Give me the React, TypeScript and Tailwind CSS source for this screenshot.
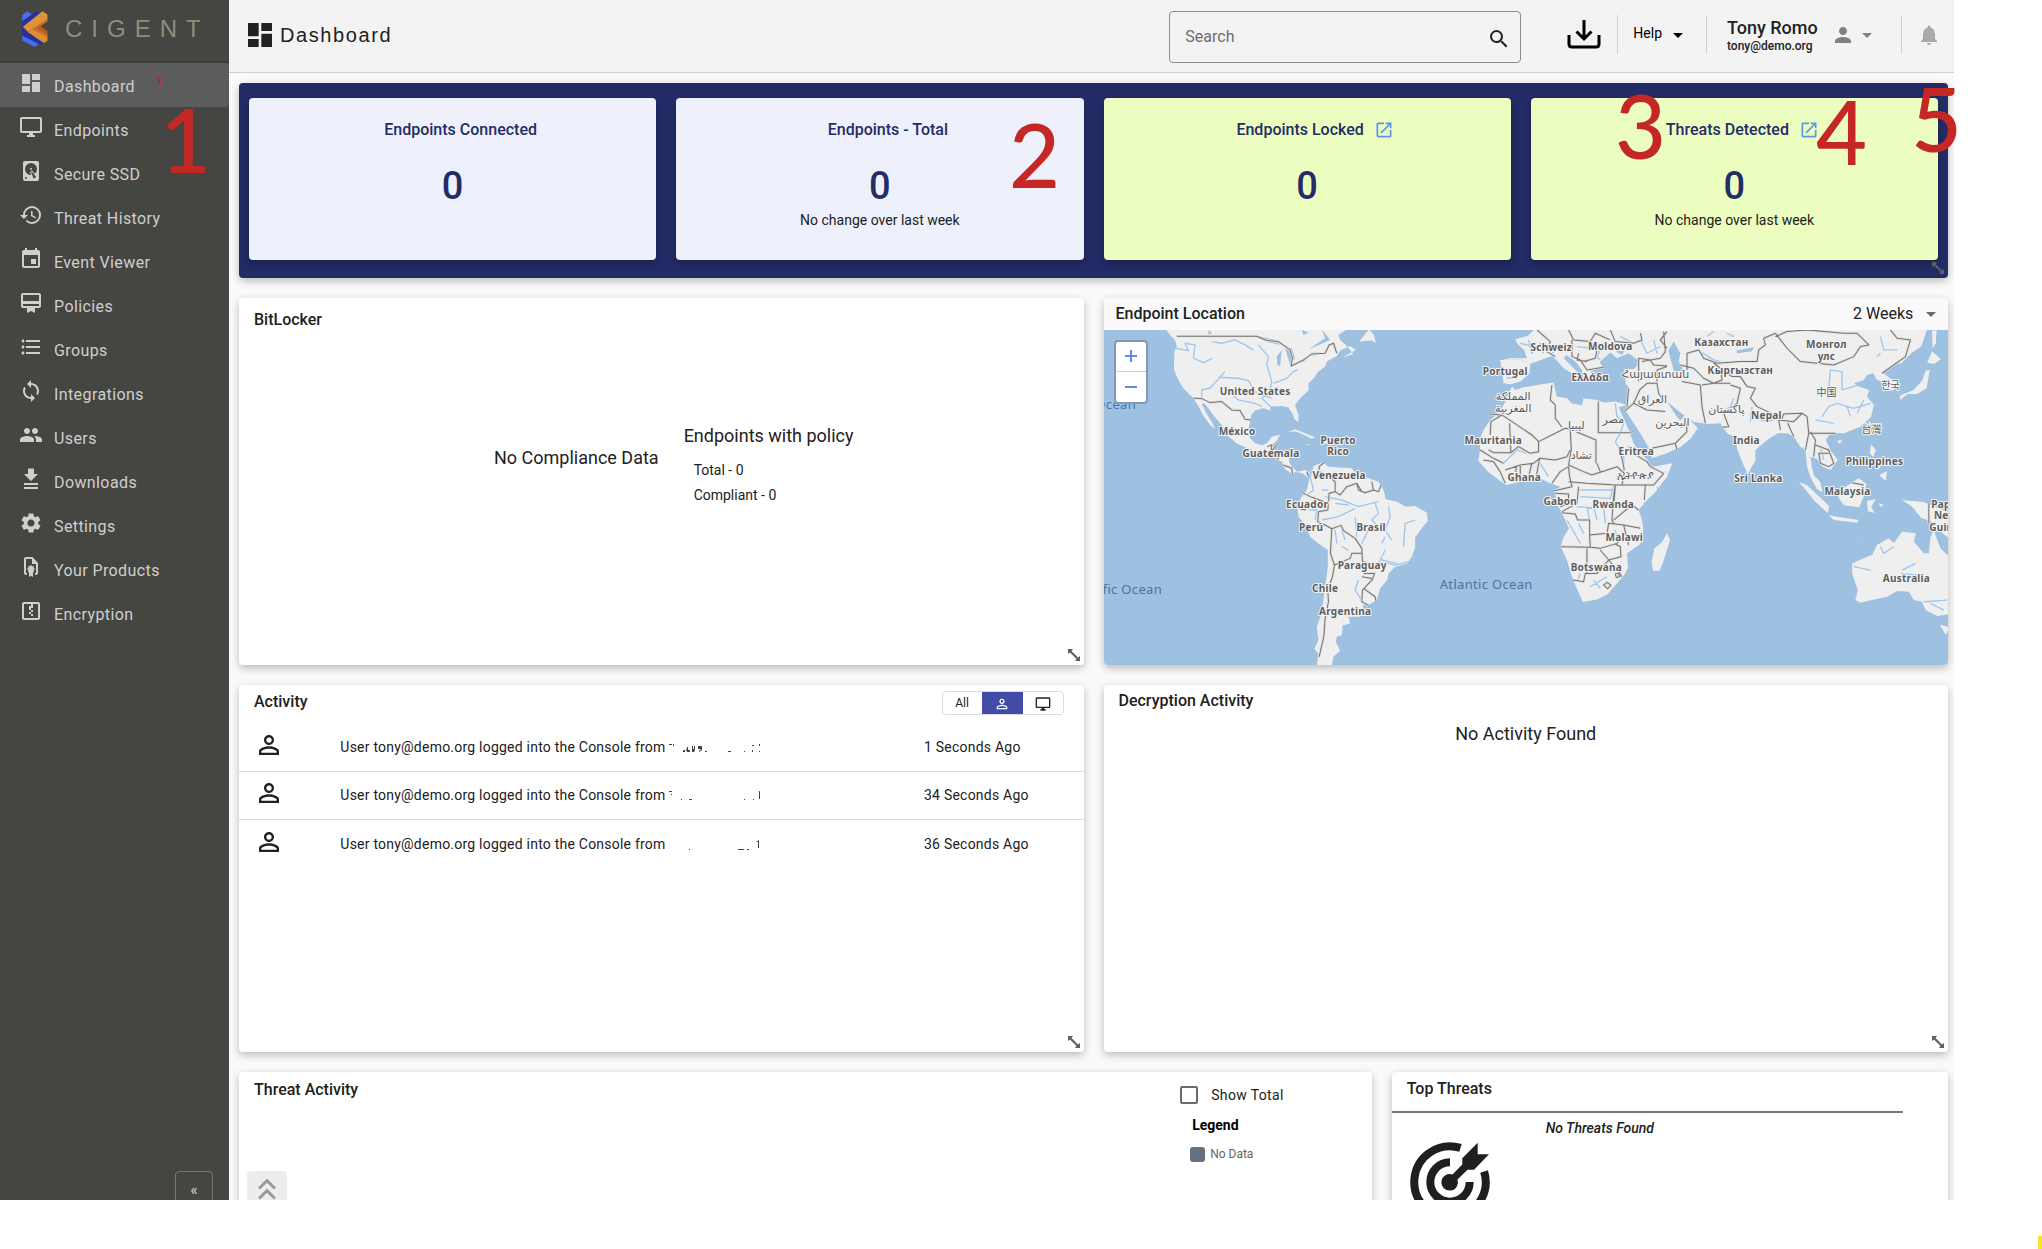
import React from "react";
import {
  MdArrowDropDown,
  MdCardMembership,
  MdDashboard,
  MdEvent,
  MdFormatListBulleted,
  MdHistory,
  MdKeyboardDoubleArrowUp,
  MdNotifications,
  MdOpenInNew,
  MdOutlineDesktopWindows,
  MdPeople,
  MdPerson,
  MdPersonOutline,
  MdSearch,
  MdSettings,
  MdSync,
} from "react-icons/md";

type IconProps = { className?: string };

function glyph(d: string) {
  return function Glyph({ className }: IconProps) {
    return (
      <svg viewBox="0 0 24 24" className={className} fill="currentColor" aria-hidden="true">
        <path fillRule="evenodd" d={d} />
      </svg>
    );
  };
}

const HardDisk = glyph(
  "M6 2h12a2 2 0 0 1 2 2v16a2 2 0 0 1-2 2H6a2 2 0 0 1-2-2V4a2 2 0 0 1 2-2M12 4a6 6 0 0 0-6 6c0 3.31 2.69 6 6.1 6l-.88-2.23a1 1 0 0 1 .37-1.36l.86-.5a1 1 0 0 1 1.37.37l1.92 2.42A5.98 5.98 0 0 0 18 10a6 6 0 0 0-6-6m0 5a1 1 0 0 1 1 1 1 1 0 0 1-1 1 1 1 0 0 1-1-1 1 1 0 0 1 1-1m-5 9a1 1 0 0 0-1 1 1 1 0 0 0 1 1 1 1 0 0 0 1-1 1 1 0 0 0-1-1m5.09-4.73 2.49 6.31 2.59-1.5-4.22-5.31z",
);
const DownloadBars = glyph("M9 1.5h6V7h4l-7 7-7-7h4zM5 16h14v2H5zM5 20h14v2H5z");
const FileCertificate = glyph(
  "M7 2a2 2 0 0 0-2 2v14c0 1 1 2 3 2v-2H7V4h6v5h4v9h-1v2c2 0 3-1 3-2V8l-5.500-6zM12 9.500l1 2 2.200-.7-.7 2.200 2 1-2 1 .7 2.200-1.200-.3V22l-2-1.200L10 22v-5.100l-1.200.3.7-2.200-2-1 2-1-.7-2.200 2.200.7z",
);
const ZipBox = glyph(
  "M5 3h14a2 2 0 0 1 2 2v14a2 2 0 0 1-2 2H5a2 2 0 0 1-2-2V5a2 2 0 0 1 2-2M5 5v14h14V5h-5v2h-2V5zM12 7h2v2h-2zM10 7h2v2h-2zM12 11h2v2h-2zM10 9h2v2h-2zM10 13h2v2h-2zM12 15h2v2h-2z",
);

const navItems: { label: string; Icon: React.ComponentType<IconProps> }[] = [
  { label: "Dashboard", Icon: MdDashboard },
  { label: "Endpoints", Icon: MdOutlineDesktopWindows },
  { label: "Secure SSD", Icon: HardDisk },
  { label: "Threat History", Icon: MdHistory },
  { label: "Event Viewer", Icon: MdEvent },
  { label: "Policies", Icon: MdCardMembership },
  { label: "Groups", Icon: MdFormatListBulleted },
  { label: "Integrations", Icon: MdSync },
  { label: "Users", Icon: MdPeople },
  { label: "Downloads", Icon: DownloadBars },
  { label: "Settings", Icon: MdSettings },
  { label: "Your Products", Icon: FileCertificate },
  { label: "Encryption", Icon: ZipBox },
];

function Logo() {
  return (
    <svg viewBox="0 0 78 110" className="h-9 w-[26px]" aria-hidden="true">
      <path fill="#4a6cf0" d="M0 12 15 1l15 9L0 32z" />
      <path fill="#2531a0" d="M0 31 44 1l16 10L0 56z" />
      <path fill="#2531a0" d="M0 50 68 97l-18 6L0 78z" />
      <path fill="#1b2470" d="M12 62l14 0 22 15-22-3z" />
      <path fill="#4a6cf0" d="M0 76l51 25-13 9L0 90z" />
      <path fill="#b9581d" d="M46 40 77 60v20L22 60z" />
      <path fill="#df8d32" d="M36 54 77 79v13l-11 6L16 64z" />
      <path fill="#c96d27" d="M30 56 77 22v10L46 53l31 19v8z" />
      <path fill="#e0923a" d="M2 48 62 1l15 10v13L18 64z" />
    </svg>
  );
}

function Sidebar() {
  return (
    <aside className="relative flex w-[229px] shrink-0 flex-col bg-[#454542] text-[#cfcfcd]">
      <div className="flex h-[63px] items-center border-b-2 border-[#3c3c39] pb-1 pl-[22px]">
        <Logo />
        <span className="pt-px pl-[17px] font-['Liberation_Sans',sans-serif] text-2xl tracking-[9px] text-[#8f8e7b]">CIGENT</span>
      </div>
      <nav aria-label="Main">
        <ul>
          {navItems.map(({ label, Icon }, i) => (
            <li key={label}>
              <a
                href={"#" + label.toLowerCase().replace(" ", "-")}
                aria-current={i === 0 ? "page" : undefined}
                className={
                  i === 0
                    ? "flex h-11 items-center gap-[11px] rounded-r bg-[#5c5c5c] pl-[19px]"
                    : "flex h-11 items-center gap-[11px] pl-[19px]"
                }
              >
                <Icon className="mb-1 size-6" />
                <span className="pt-[3px] tracking-wide">{label}</span>
              </a>
            </li>
          ))}
        </ul>
      </nav>
      <button
        type="button"
        aria-label="Collapse menu"
        className="absolute right-4 -bottom-2 h-[37px] w-[38px] rounded border border-[#777] text-base leading-9"
      >
        «
      </button>
    </aside>
  );
}

function TopBar() {
  return (
    <header className="flex h-[73px] shrink-0 items-center border-b border-[#cfcfcf] bg-[#f3f3f3] pr-[13px] pb-[3px] pl-[15px]">
      <MdDashboard className="size-8" />
      <h1 className="pl-1 font-['Liberation_Sans',sans-serif] text-xl tracking-[0.08em]">Dashboard</h1>
      <div className="mt-1 ml-auto flex h-[52px] w-[352px] items-center rounded border border-[#8c8c8c] pr-[9px] pl-[15px]">
        <input
          type="text"
          aria-label="Search"
          placeholder="Search"
          className="h-8 min-w-0 grow bg-transparent outline-none placeholder:text-[#6d6d6d]"
        />
        <MdSearch className="mt-[5px] size-6" />
      </div>
      <button type="button" aria-label="Download" className="mr-4 mb-[2px] ml-[46px]">
        <svg viewBox="0 0 34 30" className="h-[30px] w-[34px]" fill="none" stroke="#000" strokeWidth="3" aria-hidden="true">
          <path d="M17 1v18M9.500 12.500 17 20l7.500-7.500M2 16v9q0 3 3 3h24q3 0 3-3v-9" />
        </svg>
      </button>
      <button type="button" className="flex h-[39px] items-center border-l border-[#d0d0d0] pr-4 pb-[3px] pl-[15px] text-sm text-black">
        Help
        <MdArrowDropDown className="mt-[3px] ml-1 size-6" />
      </button>
      <button type="button" className="flex h-[39px] items-center border-l border-[#d0d0d0] pr-[22px] pl-5 text-left">
        <span className="block w-[104px] pt-[2px] font-medium">
          <span className="block text-lg leading-5">Tony Romo</span>
          <span className="block text-xs leading-4">tony@demo.org</span>
        </span>
        <MdPerson className="size-6 text-[#808080]" />
        <MdArrowDropDown className="size-6 text-[#808080]" />
      </button>
      <button type="button" aria-label="Notifications" className="flex h-[39px] items-center border-l border-[#d0d0d0] pl-[15px]">
        <MdNotifications className="size-6 text-[#a9a9a9]" />
      </button>
    </header>
  );
}

function ResizeMark() {
  return (
    <svg
      viewBox="0 0 14 14"
      className="absolute right-[3px] bottom-[3px] size-[14px] cursor-se-resize text-[#5f5f5f]"
      fill="currentColor"
      aria-hidden="true"
    >
      <path d="M1 1h5L4.500 3l6.500 6.500 2-1.500v5H8l1.500-2L3 4.500 1 6z" />
    </svg>
  );
}

function Card({ className, children }: { className: string; children: React.ReactNode }) {
  return (
    <section className={"relative overflow-hidden rounded bg-white shadow-[0_3px_8px_rgba(0,0,0,0.26)] " + className}>
      {children}
    </section>
  );
}

function Stat({ label, linked, note, tone }: { label: string; linked?: boolean; note?: string; tone: string }) {
  return (
    <div className={"h-[162px] rounded pt-5 text-center shadow-[0_3px_8px_rgba(0,0,0,0.3)] " + tone}>
      <h2 className="flex h-6 items-center justify-center pl-4 font-medium text-[#232c67]">
        {label}
        {linked && (
          <a href="#details" aria-label={label + " details"} className="ml-[10px] text-[#5b93ee]">
            <MdOpenInNew className="size-5" />
          </a>
        )}
      </h2>
      <p className="pt-[21px] text-[38px] leading-[46px] font-medium text-[#232c67]">0</p>
      {note && <p className="pt-px text-sm">{note}</p>}
    </div>
  );
}

/* Land outlines; each group has its own origin, drawn at three units per map pixel. */
const americas = [
  "M210 115 225 135 240 150 245 170 238 185 237 240 250 270 265 295 295 325 308 345 322 372 345 405 360 416 350 395 335 372 320 342 328 340 342 358 362 385 380 405 398 437 422 458 450 472 480 482 505 486 532 502 560 515 570 538 590 550 602 546 622 550 638 562 644 546 630 540 606 545 590 530 582 515 583 495 550 491 526 486 530 466 545 452 555 434 530 440 515 460 500 466 480 460 465 445 459 420 465 395 468 376 480 362 505 355 526 362 526 350 560 348 580 353 592 370 598 388 610 396 610 375 600 345 615 325 640 302 640 280 656 265 668 246 690 230 695 215 725 198 735 182 765 168 782 180 742 203 775 192 752 165 735 150 730 135 760 115z",
  "M792 155 812 130 822 118 836 135 842 160 830 152z",
  "M578 427 600 418 630 430 660 442 650 446 620 432 600 424z",
  "M682 442 700 440 702 462 684 460zM630 462 642 463 640 466z",
  "M644 560 652 530 682 517 700 530 770 535 782 550 812 562 850 575 865 600 872 628 905 635 932 650 960 648 995 668 998 692 980 715 960 742 960 772 950 800 936 820 900 830 880 850 876 870 855 895 845 930 820 945 802 945 810 972 790 980 760 980 765 1000 742 1006 740 1035 725 1040 722 1055 735 1082 715 1100 710 1127 665 1127 670 1092 658 1076 670 1050 665 1010 676 980 685 930 690 890 698 830 698 780 665 757 645 740 635 710 610 680 607 655 617 625 635 600 640 580z",
];
const oldWorld = [
  "M35 290 15 335 0 365-30 390-50 420-62 450-60 480-66 512-35 547 0 573 18 585 60 575 100 568 115 563 150 580 180 590 163 605 170 640 190 680 206 715 190 742 181 770 200 810 215 860 237 912 248 936 290 928 320 914 350 880 375 850 383 832 380 790 420 762 429 720 425 690 415 660 428 645 430 640 462 610 500 560 516 520 450 532 443 510 420 490 400 460 385 420 370 385 355 352 380 345 345 335 310 338 290 330 250 325 245 347 215 340 200 325 170 320 165 300 160 278 120 284 70 292 45 300z",
  "M500 730 509 750 490 812 478 842 458 842 454 815 462 775 485 757z",
  "M0 212 60 207 90 222 110 215 135 205 155 198 170 212 190 235 215 250 225 272 240 255 215 230 190 205 198 195 225 215 245 240 250 265 270 277 284 265 270 245 290 238 345 228 372 232 376 282 384 290 380 350 376 362 400 400 420 430 446 475 455 505 500 490 542 470 572 445 592 415 572 392 558 370 540 392 526 375 500 335 540 368 580 395 620 402 660 400 682 432 705 440 710 475 725 515 742 552 765 512 765 480 800 450 832 430 862 430 880 440 900 470 915 480 920 530 930 562 950 598 966 607 960 577 940 555 934 530 930 500 950 506 966 530 990 540 1012 510 990 480 976 450 990 430 1030 430 1080 410 1112 380 1120 345 1100 320 1106 300 1075 290 1060 280 1090 270 1100 255 1118 250 1130 270 1145 275 1155 298 1180 302 1190 280 1165 262 1148 250 1175 225 1202 220 1232 190 1262 170 1282 112 110 112 82 138 45 148 52 162 72 180 80 205 30 205z",
  "M0 210 10 280 30 283 60 275 88 250 90 222 60 208z",
  "M1198 330 1222 312 1250 312 1278 295 1288 240 1276 242 1265 272 1240 300 1200 316zM1280 218 1295 185 1322 208 1300 222z",
  "M1295 122 1308 122 1306 160 1296 175z",
  "M895 575 922 587 986 648 982 670 942 632z",
  "M984 676 1020 682 1075 690 1070 698 1000 690z",
  "M1020 600 1075 565 1098 582 1090 620 1076 652 1030 646 1014 622z",
  "M1100 632 1126 628 1112 650 1122 668 1102 664zM1135 640 1150 645 1140 650z",
  "M1112 463 1126 480 1118 502 1108 488zM1136 556 1160 543 1156 572zM1128 520 1140 530 1130 540z",
  "M1104 392 1112 400 1106 412zM1010 452 1026 450 1018 462zM748 545 760 552 754 566z",
  "M1235 650 1205 630 1225 632 1270 636 1346 668 1346 745 1310 717 1290 692 1262 684z",
  "M1055 820 1100 800 1115 795 1130 765 1165 745 1180 760 1205 725 1246 730 1240 755 1270 790 1285 790 1290 740 1300 722 1320 775 1346 800 1346 972 1310 978 1275 960 1265 935 1240 930 1225 905 1190 903 1160 920 1115 930 1080 938 1065 930 1072 900 1055 850z",
  "M1318 1004 1346 1012 1336 1034z",
];
const inlandWater = [
  "M520 155 540 190 535 215 550 242 522 246 512 212 504 182z",
  "M298 216 330 188 350 205 385 190 420 216 400 238 350 236 312 240z",
  "M345 185 375 180 365 195zM708 182 760 172 755 184 710 190z",
];
const americaLakes = [
  "M490 138 540 150 560 165 520 158zM545 200 560 180 555 228 547 225zM570 175 590 175 600 205 585 225zM600 220 640 205 625 216zM640 198 668 186 660 196z",
  "M620 120 640 128 625 135zM680 118 705 150 640 178 690 145zM340 120 352 130 340 134z",
];
const americaBorders =
  "M245 139H485L515 152 550 155 585 180 592 205 588 228 625 210 650 192 690 190 702 165 715 160 725 190M295 325 320 326 345 338 380 335 410 360 435 362 450 388 468 390M516 470 530 465 528 485 548 462M540 500 552 508M565 525 590 535 592 552M690 515 672 530 672 545 700 560 720 575 720 605M720 605 735 615 755 590 785 580 790 600 810 608 835 600 850 605 858 585M785 580 800 605M830 575 835 600M620 607 650 622 700 640 702 610 720 605M610 655 630 660 640 640M700 640 698 660 670 665 668 695 690 705 710 716 738 706 745 722 780 745 800 775 802 815M710 716 706 790 718 825 765 805 770 790 800 790M718 825 712 860 698 900 700 935 690 985 686 1040 672 1100M802 815 830 820M805 850 838 850 832 868 802 900 800 935 820 946M830 865 800 860M805 895 840 920 842 932M635 545 640 558";
const oldWorldBorders =
  "M-30 435-28 395 5 375 95 435 115 455 195 415 210 418 213 480 205 525 250 545 275 555M155 285 150 330 165 345 165 385 185 412M210 418 287 450 287 520M294 335V428H385L398 425M5 375-30 372M28 400 32 488-20 488-35 480M-60 480-20 505 10 520M-50 510-20 515 0 545 15 580M32 488 55 470 90 490 115 485 115 455M15 540 60 525 100 520 118 505 165 510 200 500 210 480M45 575 48 530M60 570 60 528M85 560 95 520M108 560 118 505M155 580 180 545 205 530 208 560 215 590 162 602M205 575 260 580 345 585 390 585 460 585 490 550 450 530 440 515M275 555 350 530 372 550 365 585M290 520 300 545M362 490 372 540M385 470 415 500 440 515M345 585 340 620 335 690 340 700M235 590 230 640 185 665M165 610 205 612 205 640 180 650M185 668 225 672 232 690 268 690 268 735 270 772 182 770M268 735 320 730 325 700 370 705 420 715M370 705 380 745 385 765M270 772 300 775 350 760 375 730M260 775V850M218 870 250 875 255 850 290 850 325 810 362 800 360 770 345 762M300 780 330 815M325 810 355 845 365 860M340 690 395 645 415 660M435 585 432 630M345 590 340 645 370 642M310 885 320 877 332 885 322 896zM345 852 355 850 358 860 348 862z" +
  "M375 362 400 340 418 300 440 280 470 280 475 310 490 335M385 295 380 350M400 340 440 360 495 365M455 475 525 460 560 425 558 400M525 460 530 480M415 275 415 205 450 210 460 225 500 228M470 275 470 240 500 230M110 120 150 155 140 185 165 200M205 120 220 150 270 155 285 130 330 150M215 150 215 200 240 210 260 240 310 232M270 155 290 180 285 205 250 215M235 190 230 210 260 215M330 120 345 155 400 160 425 150 420 130M425 215 480 205 495 185 490 125M500 125 480 150 500 175M560 240 560 190 595 180 610 205 650 220 720 215 770 215 775 180 795 165 790 145 825 130M540 225 580 235 610 265 640 280 665 270 660 235 640 220M660 235 695 260 720 260 740 290 765 295 750 325 770 350 845 385 850 372 905 370M690 280 640 280 605 285M545 275 600 285 605 350 615 400M690 285 720 295 710 340 670 370 685 410 665 412M800 375 835 390 880 395 905 370 920 380 925 430 915 480M835 390 840 420M862 400 880 440M825 130 860 175 900 215 1000 225 1060 200 1080 170 1105 165 1070 130 1030 130 920 120 860 125 825 140M1170 120 1190 145 1230 150 1215 200 1145 250M925 430 960 430 990 430 1005 430M930 425 945 450 940 500M945 465 985 480 1000 520 985 530 960 520 955 490 985 490M1285 640V700M1055 578 1090 585";
const americaRivers =
  "M240 175 280 182 270 160 300 165 295 205 325 218 352 205M350 155 380 160 420 150 450 165 475 180M490 165 520 200 515 225 530 275M320 325 320 300 345 295 390 245M370 262 430 265 460 272 480 305 530 325M395 300 430 330 480 340 500 350M530 275 525 300 500 325 528 352M535 280 575 265 595 245 608 240M655 530 645 560 655 600 640 612M640 660 665 660 660 690M690 620 740 630 790 650 850 635M680 690 730 680 780 655M700 600 680 600M720 640 760 645M840 640 850 670 830 690 850 710M880 650 885 680 870 720 890 750M960 690 930 700 925 770M780 680 785 740M720 720 725 760M740 720 750 750M820 720 800 760M870 740 860 760M855 805 880 820 900 825 940 815M870 780 850 820M790 870 780 900 800 930M860 810 905 820M740 770 760 780";
const oldWorldRivers =
  "M345 340 350 380 370 400 360 430 345 455 370 500 370 560M10 520 50 480 80 490M120 520 145 560M240 600 335 600M240 620 330 625 340 590M230 650 300 655M260 650 270 700M280 650 290 690M310 650 315 700M200 690 240 760M345 720 350 745M235 700 250 730M240 850 230 875M270 890 320 860M280 870 300 895M470 590 480 610M85 150 95 190 120 160 130 190M60 160 100 170M10 250 60 255M20 265 50 262M140 170 160 190M230 170 280 175M310 160 290 200 300 210M360 140 400 160M420 150 440 190 480 170M460 150 470 190M600 185 640 210 660 215M620 140 640 125M680 130 700 140M700 325 690 350 660 370M750 380 800 395 835 385M755 350 750 395M985 290 990 240 1025 245 1025 300 1090 280M965 380 985 350 1010 340 1060 355 1110 340M1040 350 1050 380M1090 330 1070 370M945 390 1000 400M1140 140 1150 180 1190 180M1130 200 1140 190M1070 760 1090 740M1060 830 1110 840M1205 840 1245 820M1200 850 1250 855M1270 935 1340 930M1290 940 1330 960M1140 770 1150 790 1180 770M960 470 970 510M905 600 910 590";

const places: [string, number, number][] = [
  ["United States", 151, 65], ["México", 133, 105], ["Guatemala", 167, 127], ["Puerto", 234, 114], ["Rico", 234, 125],
  ["Venezuela", 235, 149], ["Ecuador", 203, 178], ["Perú", 207, 201], ["Brasil", 267, 201], ["Paraguay", 258, 239],
  ["Chile", 221, 262], ["Argentina", 241, 285], ["Portugal", 401, 45], ["Mauritania", 389, 114], ["Ghana", 420, 151],
  ["Schweiz", 447, 21], ["Moldova", 506, 20], ["Ελλάδα", 486, 51], ["Казахстан", 617, 16], ["Кыргызстан", 636, 44],
  ["Монгол", 722, 18], ["улс", 722, 30], ["Nepal", 662, 89], ["India", 642, 114], ["Eritrea", 532, 125],
  ["Sri Lanka", 654, 152], ["Philippines", 770, 135], ["Malaysia", 743, 165], ["Gabon", 456, 175], ["Rwanda", 509, 178],
  ["Malawi", 520, 211], ["Botswana", 492, 241], ["Australia", 802, 252], ["Papua", 843, 178], ["New", 841, 189],
  ["Guinea", 843, 201],
];
const lightPlaces: [string, number, number][] = [
  ["المملكة", 409, 70], ["المغربية", 409, 82], ["Հայաստան", 551, 48], ["العراق", 548, 73], ["مصر", 509, 93],
  ["ليبيا", 472, 99], ["البحرين", 568, 96], ["پاکستان", 622, 83], ["تشاد", 477, 129], ["ኢትዮጵያ", 531, 149],
];
const cjkPlaces: [string, number, number][] = [["中国", 722, 66], ["한국", 786, 59], ["台灣", 767, 103]];

function WorldMap() {
  return (
    <svg viewBox="0 0 844 335" preserveAspectRatio="xMidYMid slice" className="block h-full w-full" role="img" aria-label="World map of endpoints">
      <rect width="844" height="335" fill="#9ec1e2" />
      <g transform="translate(-9 -40) scale(.33333)" strokeLinejoin="round">
        {americas.map((d) => (
          <path key={d} d={d} fill="#efefef" />
        ))}
        {americaLakes.map((d) => (
          <path key={d} d={d} fill="#9ec1e2" />
        ))}
        <path d={americaRivers} fill="none" stroke="#9ec7ef" strokeWidth="4" />
        <path d={americaBorders} fill="none" stroke="#e0e0e0" strokeWidth="8" />
        <path d={americaBorders} fill="none" stroke="#737373" strokeWidth="3" />
      </g>
      <g transform="translate(396 -40) scale(.33333)" strokeLinejoin="round">
        {oldWorld.map((d) => (
          <path key={d} d={d} fill="#efefef" />
        ))}
        {inlandWater.map((d) => (
          <path key={d} d={d} fill="#9ec1e2" />
        ))}
        <path d={oldWorldRivers} fill="none" stroke="#9ec7ef" strokeWidth="4" />
        <path d={oldWorldBorders} fill="none" stroke="#e0e0e0" strokeWidth="8" />
        <path d={oldWorldBorders} fill="none" stroke="#737373" strokeWidth="3" />
      </g>
      <g className="font-['Noto_Sans',sans-serif] text-[13px] tracking-wide" fill="#4f749b">
        <text x="382" y="259" textAnchor="middle">Atlantic Ocean</text>
        <text x="58" y="264" textAnchor="end">Pacific Ocean</text>
        <text x="32" y="79" textAnchor="end">Pacific Ocean</text>
      </g>
      <g textAnchor="middle" stroke="#f4f4f4" strokeWidth="2" strokeLinejoin="round" paintOrder="stroke" fill="#5c5c5c">
        <g className="font-['Noto_Sans',sans-serif] text-[10px] font-bold tracking-wide">
          {places.map(([name, x, y]) => (
            <text key={name} x={x} y={y}>{name}</text>
          ))}
        </g>
        <g className="font-['DejaVu_Sans','Noto_Sans',sans-serif] text-[11px]">
          {lightPlaces.map(([name, x, y]) => (
            <text key={name} x={x} y={y}>{name}</text>
          ))}
        </g>
        <g className="font-['Noto_Sans_CJK_SC','Noto_Sans_CJK_KR','Noto_Sans_CJK_TC',sans-serif] text-[10px]">
          {cjkPlaces.map(([name, x, y]) => (
            <text key={name} x={x} y={y}>{name}</text>
          ))}
        </g>
      </g>
    </svg>
  );
}

function LocationCard() {
  return (
    <Card className="col-span-6 flex h-[367px] flex-col">
      <div className="flex h-8 items-center bg-[#fafafa] pt-px pr-[5px] pl-3">
        <h2 className="font-medium">Endpoint Location</h2>
        <div className="relative ml-auto flex items-center">
          <select aria-label="Period" className="appearance-none bg-transparent pr-[29px] outline-none" defaultValue="2">
            <option value="2">2 Weeks</option>
          </select>
          <MdArrowDropDown className="pointer-events-none absolute right-0 size-6 text-[#6b6b6b]" />
        </div>
      </div>
      <div className="relative min-h-0 grow">
        <WorldMap />
        <div className="absolute top-[10px] left-[10px] w-[34px] rounded border-2 border-[#7e9ab5] bg-white text-[#5b8def]">
          <button type="button" aria-label="Zoom in" className="flex h-[30px] w-full items-center justify-center border-b border-[#ccc]">
            <svg viewBox="0 0 14 14" className="size-[14px]" stroke="currentColor" strokeWidth="2" aria-hidden="true">
              <path d="M1 7h12M7 1v12" />
            </svg>
          </button>
          <button type="button" aria-label="Zoom out" className="flex h-[30px] w-full items-center justify-center">
            <svg viewBox="0 0 14 14" className="size-[14px]" stroke="currentColor" strokeWidth="2" aria-hidden="true">
              <path d="M1 7h12" />
            </svg>
          </button>
        </div>
      </div>
    </Card>
  );
}

/* Traces left of each blanked-out address. */
const activity = [
  { age: "1 Seconds Ago", marks: "M3 3h3v1h-3zM7 3h1v2h-1zM17 9h2v2h-2zM21 6h1v3h2v2h-3v-1h-1zM26 5h1v3h1v-3h1v4l-1 2h-2zM32 5h4v4l-3 2v-1l2-2h-3zM39 10h2v1h-2zM62 10h3v1h-3zM78 10h1v1h-1zM86 9h1v2h-1zM86 4h2v1h-2zM93 3h1v2h-1zM93 10h1v1h-1z" },
  { age: "34 Seconds Ago", marks: "M3 2h3v1h-3zM5 5h1v1h-1zM15 10h1v1h-1zM23 10h3v1h-3zM78 10h1v1h-1zM87 10h1v1h-1zM92 3l2-1v8h-1v-7z" },
  { age: "36 Seconds Ago", marks: "M23 10h1v1h-1zM72 10h6v1h-6zM81 10h2v1h-2zM90 3l3-2v8h-1v-6z" },
];

function ActivityCard() {
  return (
    <Card className="col-span-6 h-[367px]">
      <div className="flex h-[38px] items-center pr-5 pl-[15px]">
        <h2 className="pb-1 font-medium">Activity</h2>
        <div className="mt-[-3px] ml-auto flex h-6 overflow-hidden rounded border border-[#dadada] text-xs" role="group" aria-label="Filter">
          <button type="button" className="w-[39px]">All</button>
          <button type="button" aria-label="Users" aria-pressed="true" className="flex w-[41px] items-center justify-center bg-[#434ba9] text-white">
            <MdPersonOutline className="mt-[3px] size-4" />
          </button>
          <button type="button" aria-label="Endpoints" className="flex w-10 items-center justify-center">
            <MdOutlineDesktopWindows className="mt-[3px] size-4" />
          </button>
        </div>
      </div>
      <table className="w-full table-fixed text-left text-sm tracking-[0.016em]">
        <tbody>
          {activity.map((row, i) => (
            <tr key={row.age} className={i < activity.length - 1 ? "h-[48px] border-b border-[#dcdcdc]" : "h-[50px]"}>
              <td className="w-[12%] pl-[15px]">
                <MdPersonOutline className="mb-1 size-[30px]" />
              </td>
              <td className="w-[69%]">
                User tony@demo.org logged into the Console from
                <svg viewBox="0 0 98 14" className="inline-block h-[14px] w-[98px] align-middle" fill="#444" aria-hidden="true">
                  <path d={row.marks} />
                </svg>
              </td>
              <td className="pl-px">{row.age}</td>
            </tr>
          ))}
        </tbody>
      </table>
      <ResizeMark />
    </Card>
  );
}

function Target() {
  return (
    <svg viewBox="-40 -40 80 80" className="size-20" fill="none" stroke="#1f1f1f" strokeWidth="8" aria-hidden="true">
      <path d="M10.500-34.100A35.700 35.700 0 1 0 34.100-10.500" />
      <path d="M0-19.700A19.700 19.700 0 1 0 19.700 0" />
      <path
        fill="#1f1f1f"
        stroke="none"
        d="M12.300-23.700 27.700-39.300V-27.700H39L24-12.300H17.500L7.500-2.500A8.300 8.300 0 1 1 2.500-7.500L12.300-17.500z"
      />
    </svg>
  );
}

const callouts = [
  { n: "1", place: "left-[160px] top-[94px]" },
  { n: "2", place: "left-[1009px] top-[109px]" },
  { n: "3", place: "left-[1615px] top-[80px]" },
  { n: "4", place: "left-[1816px] top-[86px]" },
  { n: "5", place: "left-[1911px] top-[73px]" },
];

export default function App() {
  return (
    <div className="relative h-screen overflow-hidden bg-white font-[Roboto,sans-serif] text-base text-[#212121]">
      <div className="mr-[88px] flex h-[calc(100vh-49px)] overflow-hidden">
        <Sidebar />
        <div className="relative flex min-w-0 grow flex-col bg-[#fafafa]">
          <TopBar />
          <main className="grid min-h-0 grow auto-rows-max grid-cols-12 gap-5 overflow-hidden pt-[10px] pr-[6px] pl-[10px]">
            <section className="relative col-span-12 grid h-[195px] grid-cols-4 gap-5 rounded bg-[#232c67] px-[10px] pt-[15px] shadow-[0_3px_8px_rgba(0,0,0,0.26)]">
              <Stat label="Endpoints Connected" tone="bg-[#eef1fb]" />
              <Stat label="Endpoints - Total" note="No change over last week" tone="bg-[#eef1fb]" />
              <Stat label="Endpoints Locked" linked tone="bg-[#ebfebf]" />
              <Stat label="Threats Detected" linked note="No change over last week" tone="bg-[#ebfebf]" />
              <ResizeMark />
            </section>

            <Card className="col-span-6 h-[367px]">
              <h2 className="pt-[10px] pl-[15px] font-medium">BitLocker</h2>
              <div className="flex justify-center gap-[25px] pt-[90px] pl-[25px]">
                <p className="pt-[22px] text-lg">No Compliance Data</p>
                <div>
                  <h3 className="text-lg">Endpoints with policy</h3>
                  <p className="pt-[10px] pl-[10px] text-sm">Total - 0</p>
                  <p className="pt-[5px] pl-[10px] text-sm">Compliant - 0</p>
                </div>
              </div>
              <ResizeMark />
            </Card>
            <LocationCard />

            <ActivityCard />
            <Card className="col-span-6 h-[367px]">
              <h2 className="pt-1 pl-[15px] font-medium">Decryption Activity</h2>
              <p className="pt-[7px] text-center text-lg">No Activity Found</p>
              <ResizeMark />
            </Card>

            <Card className="col-span-8 flex h-[367px] justify-between pr-[88px] pl-[15px]">
              <h2 className="pt-[6px] font-medium">Threat Activity</h2>
              <div className="pt-[14px]">
                <label className="flex items-center gap-[13px] text-sm leading-[18px] tracking-wide">
                  <input type="checkbox" className="size-[18px] appearance-none rounded-xs border-2 border-[#6b6b6b]" />
                  Show Total
                </label>
                <h3 className="pt-[11px] pl-3 text-sm font-bold text-black">Legend</h3>
                <p className="flex items-center gap-[5px] pt-[11px] pl-[10px] text-xs text-[#666]">
                  <span className="size-[15px] rounded-[3px] bg-[#64727f]" />
                  No Data
                </p>
              </div>
            </Card>
            <Card className="col-span-4 h-[367px]">
              <h2 className="pt-[5px] pl-[15px] font-medium">Top Threats</h2>
              <div className="mt-[10px] mr-[45px] border-t-2 border-[#777]" />
              <div className="flex pl-[18px]">
                <div className="pt-[29px]">
                  <Target />
                </div>
                <p className="pt-[5px] pl-14 text-sm font-medium italic">No Threats Found</p>
              </div>
            </Card>
          </main>
          <button
            type="button"
            aria-label="Back to top"
            className="absolute -bottom-[11px] left-[18px] flex size-10 items-center justify-center rounded bg-[#ededed]"
          >
            <MdKeyboardDoubleArrowUp className="mb-1 size-9 text-[#999]" />
          </button>
        </div>
      </div>
      <div className="absolute right-0 bottom-0 h-[13px] w-1 bg-[#f9e22e]" />
      <div className="font-[Lato,sans-serif] text-[#c52824]">
        <span className="absolute top-[73px] left-[156px] text-xs font-medium">1</span>
        {callouts.map(({ n, place }) => (
          <span key={n} className={"absolute text-[88px] leading-[90px] font-medium " + place}>
            {n}
          </span>
        ))}
      </div>
    </div>
  );
}
